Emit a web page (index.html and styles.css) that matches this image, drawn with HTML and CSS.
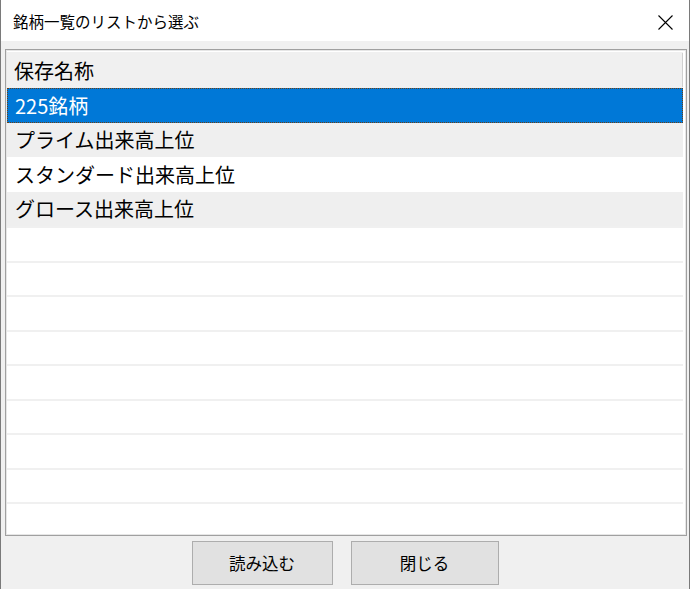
FILE: index.html
```html
<!DOCTYPE html>
<html lang="ja">
<head>
    <meta charset="UTF-8">
    <title>銘柄一覧のリストから選ぶ</title>
    <link rel="stylesheet" href="styles.css">
</head>
<body>
    <div class="window">
        <div class="titlebar">
            <span class="title">銘柄一覧のリストから選ぶ</span>
            <svg class="close" width="15" height="15" viewBox="0 0 15 15">
                <path d="M0.5 0.5 L14.5 14.5 M14.5 0.5 L0.5 14.5" stroke="#000" stroke-width="1.1" fill="none"/>
            </svg>
        </div>
        <div class="client">
            <div class="listview">
                <div class="header"><span class="col">保存名称</span></div>
                <div class="row selected">225銘柄</div>
                <div class="row alt">プライム出来高上位</div>
                <div class="row">スタンダード出来高上位</div>
                <div class="row alt">グロース出来高上位</div>
                <div class="row empty"></div>
                <div class="row empty"></div>
                <div class="row empty"></div>
                <div class="row empty"></div>
                <div class="row empty"></div>
                <div class="row empty"></div>
                <div class="row empty"></div>
                <div class="row empty"></div>
                <div class="row empty"></div>
            </div>
            <div class="buttons">
                <button class="btn load">読み込む</button>
                <button class="btn close-btn">閉じる</button>
            </div>
        </div>
    </div>
</body>
</html>
```

FILE: styles.css
```css
html, body {
    margin: 0;
    padding: 0;
}
body {
    font-family: "Noto Sans CJK JP", "Noto Sans", sans-serif;
    background: #ffffff;
}
.window {
    width: 690px;
    height: 589px;
    box-sizing: border-box;
    border-left: 1px solid #7a7a7a;
    border-right: 1px solid #7a7a7a;
    display: flex;
    flex-direction: column;
    overflow: hidden;
}
.titlebar {
    height: 41px;
    flex: none;
    background: #ffffff;
    display: flex;
    align-items: center;
    padding: 0 16px 0 12px;
    justify-content: space-between;
}
.title {
    font-size: 15.5px;
    color: #000;
    margin-top: 1px;
}
.close {
    margin-top: 4px;
}
.client {
    flex: 1;
    background: #f0f0f0;
    padding: 8px 2px 0 4px;
    display: flex;
    flex-direction: column;
}
.listview {
    height: 487px;
    box-sizing: border-box;
    border: 1px solid #a0a0a0;
    box-shadow: inset 0 0 0 1px #e6e6e6;
    background: #ffffff;
    padding: 2px 3px 0 1px;
    overflow: hidden;
    font-size: 20px;
    color: #000;
}
.header {
    height: 36px;
    background: #f0f0f0;
    display: flex;
}
.header .col {
    flex: 1;
    display: flex;
    align-items: center;
    padding-left: 7px;
    border-right: 1px solid #d0d0d0;
    margin: 1px 0;
}
.row {
    height: 34.5px;
    box-sizing: border-box;
    display: flex;
    align-items: center;
    padding-left: 8px;
    white-space: nowrap;
}
.row.alt {
    background: #efefef;
}
.row.selected {
    background: #0078d7;
    color: #ffffff;
    border: 1px dotted #6b3f14;
    padding-left: 7px;
}
.row.empty {
    border-top: 2px solid #f0f0f0;
}
.buttons {
    display: flex;
    justify-content: center;
    gap: 18px;
    margin-top: 5px;
    margin-left: -2px;
}
.btn {
    height: 44px;
    background: #e1e1e1;
    border: 1px solid #adadad;
    font-family: "Noto Sans CJK JP", "Noto Sans", sans-serif;
    font-size: 16.5px;
    color: #000;
    padding: 0;
}
.load {
    width: 141px;
}
.close-btn {
    width: 148px;
}
```
